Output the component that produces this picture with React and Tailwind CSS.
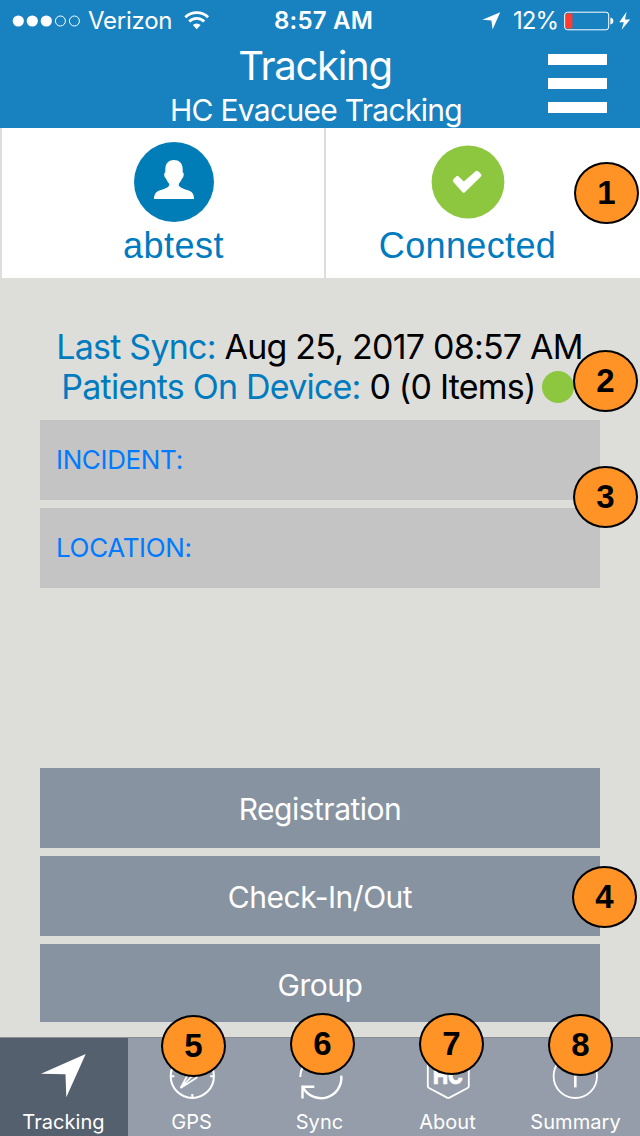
function StatusBar() {
  return (
    <div className="flex h-10 items-center pt-[1px] text-[24px] leading-[40px] text-white">
      <svg className="ml-3 h-3 w-[70px] shrink-0" viewBox="0 0 70 12">
        {[6.3, 20.3, 34.3].map((x) => (
          <circle key={x} cx={x} cy="6" r="5.6" fill="#fff" />
        ))}
        {[48.4, 62.4].map((x) => (
          <circle key={x} cx={x} cy="6" r="5" fill="none" stroke="#fff" strokeWidth="1" />
        ))}
      </svg>
      <span className="ml-[6px] w-[96px] pt-[1px] tracking-[-0.25px]">Verizon</span>
      <svg className="h-[19px] w-[26px] shrink-0" viewBox="0 0 26 19">
        <g fill="none" stroke="#fff" strokeWidth="2.8">
          <path d="M1.3 6.2 A16.4 16.4 0 0 1 24.1 6.2" />
          <path d="M5.2 10.4 A10.6 10.6 0 0 1 20.2 10.4" />
        </g>
        <path d="M12.7 18.2 L8.8 14 A5.6 5.6 0 0 1 16.6 14 Z" fill="#fff" />
      </svg>
      <span className="ml-[64px] w-[107px] pt-[1px] font-semibold tracking-[0.2px]">8:57 AM</span>
      <svg className="ml-[101px] h-[18px] w-[19px] shrink-0" viewBox="0 0 19 18">
        <path d="M18.2 0.3 L0.4 7.7 L9.4 8.6 L10.6 17.6 Z" fill="#fff" />
      </svg>
      <span className="ml-[12px] w-[51px] pt-[1px] tracking-[-0.9px]">12%</span>
      <svg className="h-[20px] w-[68px] shrink-0" viewBox="0 0 68 20">
        <rect x="0.7" y="1.2" width="44" height="17.6" rx="2.8" fill="none" stroke="#fff" strokeWidth="1" />
        <rect x="2" y="2.6" width="6.4" height="14.8" rx="1" fill="#ff3b30" />
        <path d="M46.4 6.8 Q49.4 7.2 49.4 10 Q49.4 12.8 46.4 13.4 Z" fill="#fff" />
        <path d="M62.6 0.8 L55.2 11.2 H59.8 L57.6 18.8 L66.2 8.4 H61 Z" fill="#fff" />
      </svg>
    </div>
  );
}

function Header() {
  return (
    <header className="h-32 bg-[#1882c1] text-white">
      <StatusBar />
      <div className="flex h-[88px]">
        <div className="ml-[84px] flex w-[464px] flex-col text-center font-[370]">
          <h1 className="h-[49px] pr-[2px] text-[40px] leading-[51px] tracking-[-1.3px] whitespace-nowrap">Tracking</h1>
          <h2 className="h-[39px] text-[30px] leading-[43px] tracking-[-0.7px] whitespace-nowrap">HC Evacuee Tracking</h2>
        </div>
        <button className="mt-[14px] flex h-[59px] w-[59px] flex-col justify-between">
          <span className="h-[11px] w-full bg-white" />
          <span className="h-[11px] w-full bg-white" />
          <span className="h-[11px] w-full bg-white" />
        </button>
      </div>
    </header>
  );
}

function StatusCards() {
  return (
    <section className="flex h-[150px] gap-[2px] pl-[2px] font-['Liberation_Sans',sans-serif] text-[36px] leading-[44px] text-[#007bbf]">
      <div className="flex w-[322px] flex-col items-center bg-white pt-[14px] pl-[22px]">
        <svg className="h-20 w-20" viewBox="0 0 80 80">
          <circle cx="40" cy="40" r="40" fill="#007db7" />
          <path
            d="M40 18 C45 18 48.3 21 48.6 26 L48.8 30.4 C50.2 30.6 49.8 33.4 49.2 35.2 C48.6 36 48 36.4 47.6 37.4 C46.8 39.4 45.6 40.6 44.8 41.8 L44.8 43.4 C46 45.8 50.4 46.8 54.6 48.6 C58.4 50.2 60 52 60 57 H20 C20.2 52 21.8 50.2 25.4 48.6 C29.6 46.8 34 45.8 35.2 43.4 L35.2 41.8 C34.4 40.6 33.2 39.4 32.4 37.4 C32 36.4 31.4 36 30.8 35.2 C30.2 33.4 29.8 30.6 31.2 30.4 L31.4 26 C31.7 21 35 18 40 18 Z"
            fill="#fff"
          />
        </svg>
        <span className="mt-[2px] pr-[1px] tracking-[0.5px]">abtest</span>
      </div>
      <div className="flex w-[314px] flex-col items-center bg-white pt-[14px] pr-[31px]">
        <svg className="h-20 w-20" viewBox="0 0 80 80">
          <circle cx="40" cy="40" r="36.4" fill="#8dc63f" />
          <path
            d="M25.4 37.2 L28.4 34.2 Q29.4 33.3 30.4 34.2 L35.8 39.6 L47.6 29.2 Q49 28.2 50.2 29.3 L53 32.1 Q54.1 33.3 53 34.6 L36.9 50.2 Q35.7 51.3 34.5 50.2 L25.3 39.9 Q24.3 38.5 25.4 37.2 Z"
            fill="#fff"
          />
        </svg>
        <span className="mt-[2px] tracking-[0.35px]">Connected</span>
      </div>
    </section>
  );
}

function Tab({ label, active, children }) {
  return (
    <div className={"flex w-32 flex-col items-center pt-[12px] " + (active ? "bg-[#55606e]" : "")}>
      <svg className="h-[54px] w-[60px] shrink-0" viewBox="0 0 60 54" fill="none" stroke="#fff" strokeWidth="2">
        {children}
      </svg>
      <span className="mt-1 pr-[1px] text-[20px] leading-[28px] tracking-[0.05px] text-white">{label}</span>
    </div>
  );
}

function TabBar() {
  return (
    <nav className="flex h-[99px] border-t border-[#8b8f93] bg-[#949da9]">
      <Tab label="Tracking" active>
        <path d="M53.7 4 L9 23.7 L33.5 24.3 L34.3 47.3 Z" fill="#fff" stroke="none" transform="translate(-2 0)" />
      </Tab>
      <Tab label="GPS">
        <circle cx="30.3" cy="26.3" r="21.6" />
        <path d="M30.3 4.7 V9.3 M30.3 43.9 V47.9 M8.7 26.3 H12.4 M48.2 26.3 H51.9" />
        <path d="M18.6 38 L26.2 24.2 L42 14 L34.4 28 Z M18.6 38 L31 25" strokeWidth="1.7" />
      </Tab>
      <Tab label="Sync">
        <path d="M10.3 27 A20.4 20.4 0 0 1 49 18 M50 5 V17 H39" />
        <path d="M51.3 25.7 A20.4 20.4 0 0 1 13 37.4 M24.3 36.8 H12.5 V48.6" strokeWidth="2.4" />
      </Tab>
      <Tab label="About">
        <path
          d="M9.8 12.5 L30.3 2 L50.8 12.5 V36 Q50.8 37.4 49.6 38 L31.5 47.6 Q30.3 48.2 29.1 47.6 L11 38 Q9.8 37.4 9.8 36 Z"
          strokeWidth="1.8"
        />
        <text x="15" y="34" textLength="30" lengthAdjust="spacingAndGlyphs" className="text-[23px] font-extrabold" fill="#fff" strokeWidth="0.5">
          HC
        </text>
      </Tab>
      <Tab label="Summary">
        <circle cx="29.3" cy="26.3" r="21.7" strokeWidth="1.8" />
        <path d="M29.3 20 V37.4" strokeWidth="2.6" />
        <circle cx="29.3" cy="14.5" r="1.6" fill="#fff" stroke="none" />
      </Tab>
    </nav>
  );
}

const badges = [
  [574, 162],
  [573, 350],
  [573, 466],
  [572, 866],
  [161, 1015],
  [290, 1013],
  [419, 1013],
  [548, 1014],
];

export default function App() {
  return (
    <div className="relative flex h-[1136px] w-[640px] flex-col overflow-hidden bg-[#dddeda] font-['Inter',sans-serif]">
      <Header />
      <StatusCards />

      <main className="flex h-[759px] flex-col pt-[49px]">
        <div className="flex flex-col items-center pr-[1px] text-[34px] leading-[40px] tracking-[-0.78px] whitespace-nowrap text-black">
          <p>
            <span className="text-[#007bbf]">Last Sync:</span> Aug 25, 2017 08:57 AM
          </p>
          <p className="flex items-center gap-[6px] pr-[4px]">
            <span>
              <span className="text-[#007bbf]">Patients On Device:</span> 0 (0 Items)
            </span>
            <i className="h-8 w-8 rounded-full bg-[#8dc63f]" />
          </p>
        </div>
        <div className="mx-10 mt-[13px] flex flex-col gap-2 text-[26px] leading-[80px] tracking-[-0.35px] text-[#007aff]">
          <div className="h-20 bg-[#c4c4c4] pl-4">INCIDENT:</div>
          <div className="h-20 bg-[#c4c4c4] pl-4">LOCATION:</div>
        </div>
        <div className="mx-10 mt-[180px] flex flex-col gap-2 text-center text-[30px] leading-[82px] tracking-[-0.5px] text-white">
          <button className="h-20 bg-[#8793a1]">Registration</button>
          <button className="h-20 bg-[#8793a1]">Check-In/Out</button>
          <button className="h-[78px] bg-[#8793a1]">Group</button>
        </div>
      </main>

      <TabBar />

      {badges.map(([left, top], i) => (
        <div
          key={i}
          className="absolute flex h-[62px] w-[65px] items-center justify-center rounded-[50%] border-2 border-black bg-[#ff9326] pb-[1px] font-['Liberation_Sans',sans-serif] text-[33px] leading-none font-bold text-black"
          style={{ left, top }}
        >
          {i + 1}
        </div>
      ))}
    </div>
  );
}
